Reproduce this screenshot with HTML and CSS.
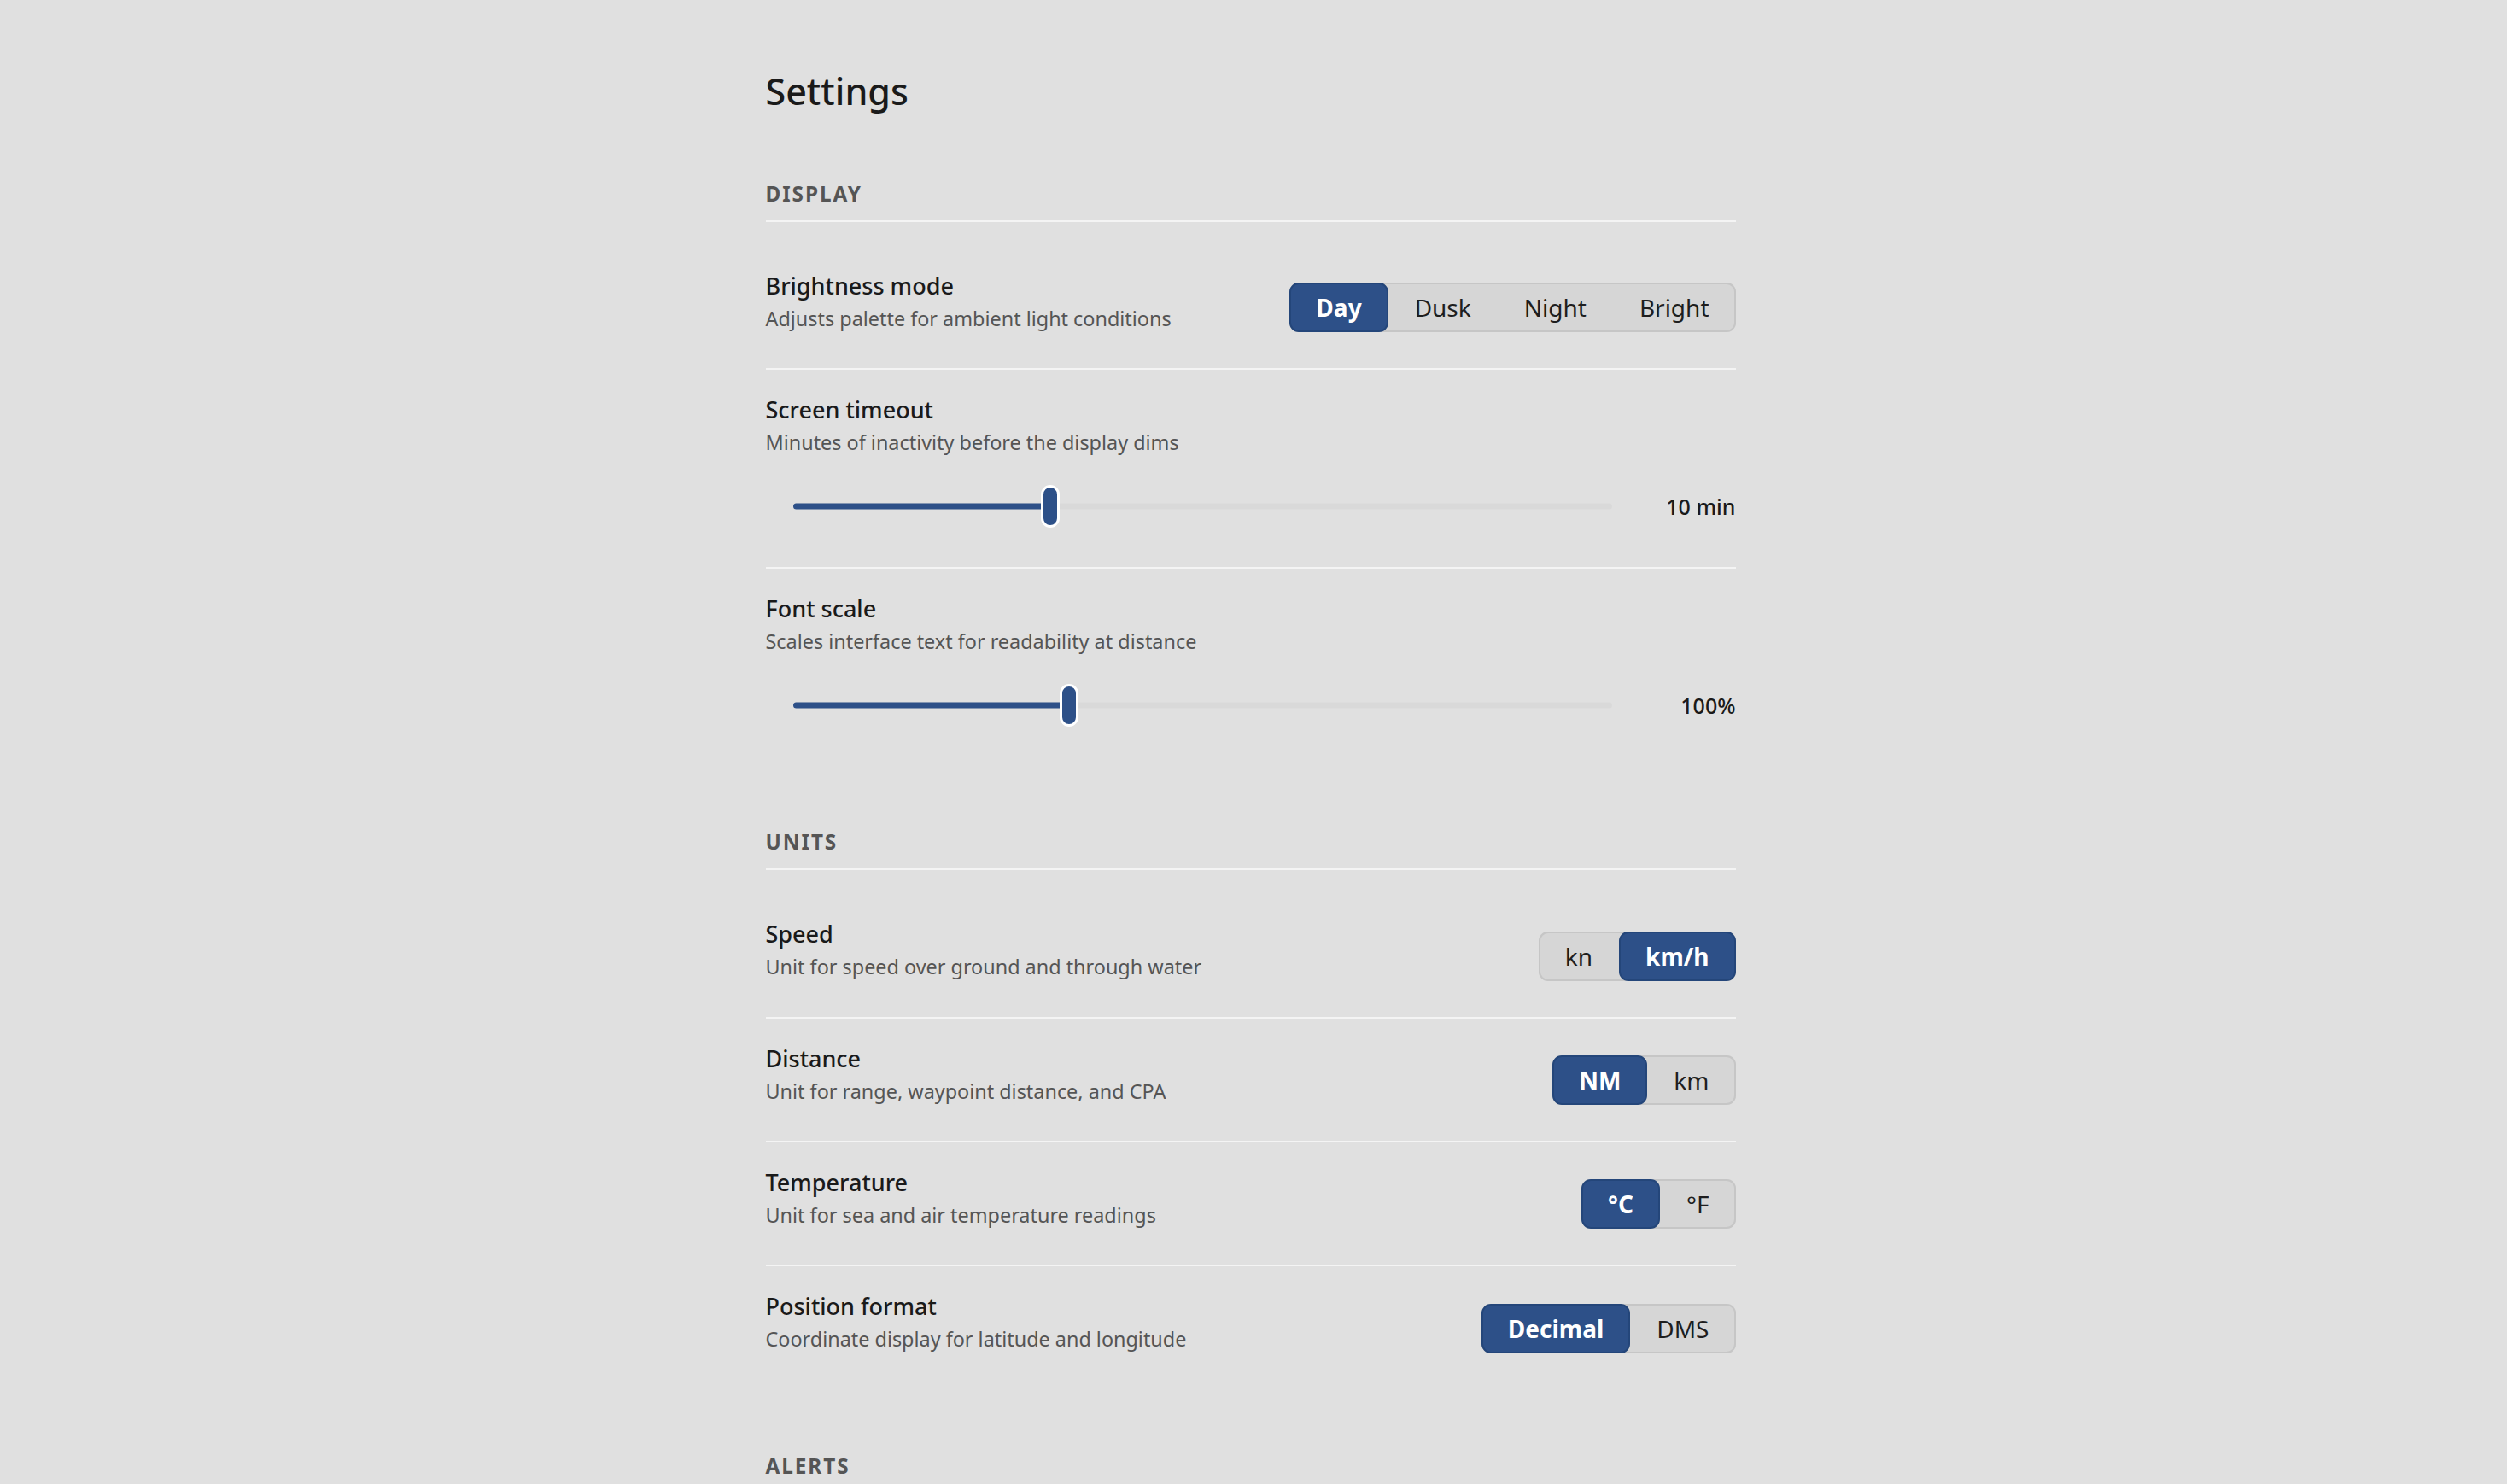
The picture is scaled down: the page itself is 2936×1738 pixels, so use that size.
FILE: index.html
```html
<!DOCTYPE html>
<html lang="en">
<head>
    <meta charset="UTF-8">
    <meta name="viewport" content="width=device-width, initial-scale=1.0">
    <title>Settings</title>
    <link rel="stylesheet" href="styles.css">
</head>
<body>
    <main class="settings">
        <h1>Settings</h1>

        <!-- Display -->
        <section class="group">
            <h2 class="group-title">Display</h2>
            <div class="row">
                <div class="row-text">
                    <div class="row-label">Brightness mode</div>
                    <div class="row-hint">Adjusts palette for ambient light conditions</div>
                </div>
                <div class="segmented">
                    <button class="seg active">Day</button>
                    <button class="seg">Dusk</button>
                    <button class="seg">Night</button>
                    <button class="seg">Bright</button>
                </div>
            </div>
            <div class="row row-stack">
                <div class="row-text">
                    <div class="row-label">Screen timeout</div>
                    <div class="row-hint">Minutes of inactivity before the display dims</div>
                </div>
                <div class="slider-row">
                    <div class="slider" style="--pct: 31.03%">
                        <div class="slider-fill"></div>
                        <div class="slider-thumb"></div>
                    </div>
                    <span class="slider-value">10 min</span>
                </div>
            </div>
            <div class="row row-stack">
                <div class="row-text">
                    <div class="row-label">Font scale</div>
                    <div class="row-hint">Scales interface text for readability at distance</div>
                </div>
                <div class="slider-row">
                    <div class="slider" style="--pct: 33.33%">
                        <div class="slider-fill"></div>
                        <div class="slider-thumb"></div>
                    </div>
                    <span class="slider-value">100%</span>
                </div>
            </div>
        </section>

        <!-- Units -->
        <section class="group">
            <h2 class="group-title">Units</h2>
            <div class="row">
                <div class="row-text">
                    <div class="row-label">Speed</div>
                    <div class="row-hint">Unit for speed over ground and through water</div>
                </div>
                <div class="segmented">
                    <button class="seg">kn</button>
                    <button class="seg active">km/h</button>
                </div>
            </div>
            <div class="row">
                <div class="row-text">
                    <div class="row-label">Distance</div>
                    <div class="row-hint">Unit for range, waypoint distance, and CPA</div>
                </div>
                <div class="segmented">
                    <button class="seg active">NM</button>
                    <button class="seg">km</button>
                </div>
            </div>
            <div class="row">
                <div class="row-text">
                    <div class="row-label">Temperature</div>
                    <div class="row-hint">Unit for sea and air temperature readings</div>
                </div>
                <div class="segmented">
                    <button class="seg active">°C</button>
                    <button class="seg">°F</button>
                </div>
            </div>
            <div class="row">
                <div class="row-text">
                    <div class="row-label">Position format</div>
                    <div class="row-hint">Coordinate display for latitude and longitude</div>
                </div>
                <div class="segmented">
                    <button class="seg active">Decimal</button>
                    <button class="seg">DMS</button>
                </div>
            </div>
        </section>

        <!-- Alerts -->
        <section class="group">
            <h2 class="group-title">Alerts</h2>
            <div class="row">
                <div class="row-text">
                    <div class="row-label">Anchor watch</div>
                    <div class="row-hint">Sound an alarm when the vessel drifts outside the radius</div>
                </div>
                <div class="segmented">
                    <button class="seg active">On</button>
                    <button class="seg">Off</button>
                </div>
            </div>
            <div class="row">
                <div class="row-text">
                    <div class="row-label">CPA warning</div>
                    <div class="row-hint">Warn when a target comes closer than the set distance</div>
                </div>
                <div class="segmented">
                    <button class="seg">Off</button>
                    <button class="seg active">On</button>
                </div>
            </div>
        </section>
    </main>
</body>
</html>
```

FILE: styles.css
```css
body {
    margin: 0;
    background-color: #e0e0e0;
    font-family: "Noto Sans", "Open Sans", sans-serif;
    color: #1a1a1a;
}
.settings {
    max-width: 1136px;
    margin: 0 auto;
    padding: 80px 7px 120px 0;
}
h1 {
    margin: 0 0 76px;
    font-size: 43px;
    line-height: 54px;
    font-weight: 500;
}
.group + .group {
    margin-top: 73px;
}
.group-title {
    margin: 0 0 28px;
    padding-bottom: 14px;
    border-bottom: 2px solid #f4f4f4;
    font-size: 24.3px;
    line-height: 34px;
    font-weight: 700;
    letter-spacing: 0.08em;
    text-transform: uppercase;
    color: #555;
}
.row {
    display: flex;
    align-items: flex-end;
    justify-content: space-between;
    padding: 29px 0 42px;
    border-bottom: 2px solid #f4f4f4;
}
.row:last-child {
    border-bottom: none;
}
.row-stack {
    display: block;
}
.row-label {
    font-size: 27px;
    line-height: 36.4px;
    font-weight: 500;
}
.row-hint {
    margin-top: 4.6px;
    font-size: 23.4px;
    line-height: 31.4px;
    color: #555;
}

/* segmented control */
.segmented {
    display: flex;
    background: #d6d6d6;
    border-radius: 11px;
    box-shadow: inset 0 0 0 2px #c6c6c6;
}
.seg {
    font-family: inherit;
    font-size: 28px;
    line-height: 42px;
    padding: 6px 29px;
    border: 2px solid transparent;
    border-radius: 11px;
    background: transparent;
    color: #1e1e1e;
    cursor: pointer;
}
.seg.active {
    background: #2d5088;
    border-color: #24467a;
    color: #fff;
    font-weight: 700;
}

/* slider */
.slider-row {
    display: flex;
    align-items: center;
    gap: 33px;
    height: 57px;
    margin-top: 30px;
    padding-left: 32px;
}
.slider {
    flex: 1;
    position: relative;
    height: 56px;
    margin: 0 11px;
}
.slider::before {
    content: "";
    position: absolute;
    left: -11px;
    right: -11px;
    top: 50%;
    height: 7px;
    transform: translateY(-50%);
    border-radius: 4px;
    background: #d9d9d9;
}
.slider-fill {
    position: absolute;
    left: -11px;
    top: 50%;
    width: calc(var(--pct) + 11px);
    height: 7px;
    transform: translateY(-50%);
    border-radius: 4px;
    background: #2d5088;
}
.slider-thumb {
    position: absolute;
    left: var(--pct);
    top: 50%;
    width: 22px;
    height: 50px;
    box-sizing: border-box;
    transform: translate(-50%, -50%);
    border: 3px solid #fff;
    border-radius: 11px;
    background: #2d5088;
}
.slider-value {
    min-width: 112px;
    text-align: right;
    font-size: 25px;
    font-weight: 500;
}
```
